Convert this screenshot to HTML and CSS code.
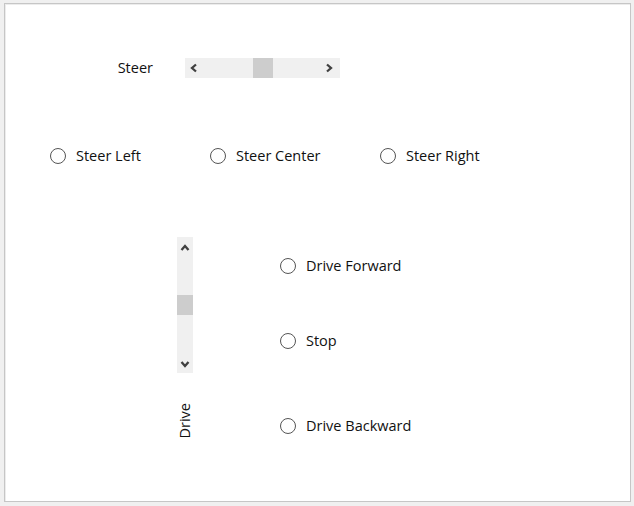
FILE: index.html
```html
<!DOCTYPE html>
<html>
<head>
<meta charset="utf-8">
<link rel="stylesheet" href="styles.css">
</head>
<body>
<div class="form">
  <div class="steer-row">
    <span class="steer-label">Steer</span>
    <div class="hscroll">
      <span class="arrow arrow-left"><svg width="10" height="10" viewBox="0 0 10 10"><path d="M7 1.5 L3 5 L7 8.5" fill="none" stroke="#404040" stroke-width="2.3"/></svg></span>
      <div class="htrack"><div class="hthumb" style="margin-left:51px"></div></div>
      <span class="arrow arrow-right"><svg width="10" height="10" viewBox="0 0 10 10"><path d="M3 1.5 L7 5 L3 8.5" fill="none" stroke="#404040" stroke-width="2.3"/></svg></span>
    </div>
  </div>

  <div class="steer-radios">
    <label class="radio"><span class="dot"></span><span>Steer Left</span></label>
    <label class="radio"><span class="dot"></span><span>Steer Center</span></label>
    <label class="radio"><span class="dot"></span><span>Steer Right</span></label>
  </div>

  <div class="drive">
    <div class="drive-left">
      <div class="vscroll">
        <span class="varrow varrow-up"><svg width="10" height="10" viewBox="0 0 10 10"><path d="M1.5 7 L5 3 L8.5 7" fill="none" stroke="#404040" stroke-width="2.3"/></svg></span>
        <div class="vtrack"><div class="vthumb" style="margin-top:36px"></div></div>
        <span class="varrow varrow-down"><svg width="10" height="10" viewBox="0 0 10 10"><path d="M1.5 3 L5 7 L8.5 3" fill="none" stroke="#404040" stroke-width="2.3"/></svg></span>
      </div>
      <span class="drive-label">Drive</span>
    </div>
    <div class="drive-radios">
      <label class="radio"><span class="dot"></span><span>Drive Forward</span></label>
      <label class="radio"><span class="dot"></span><span>Stop</span></label>
      <label class="radio"><span class="dot"></span><span>Drive Backward</span></label>
    </div>
  </div>
</div>
</body>
</html>
```

FILE: styles.css
```css
html, body {
  margin: 0;
  padding: 0;
}
body {
  background: #f0f0f0;
  width: 634px;
  height: 506px;
  overflow: hidden;
  font-family: "Open Sans", "Noto Sans", "Liberation Sans", sans-serif;
  font-size: 14.5px;
  color: #111;
}
.form {
  box-sizing: border-box;
  margin: 3px 0 0 4px;
  width: 627px;
  height: 499px;
  background: #fff;
  border: 1px solid #c6c6c6;
  box-shadow: inset 1px 1px 0 #ececec;
  display: flex;
  flex-direction: column;
}
.steer-row {
  display: flex;
  align-items: center;
  height: 20px;
  margin-top: 54px;
  padding-left: 100px;
}
.steer-label {
  width: 48px;
  text-align: right;
  margin-right: 32px;
  line-height: 20px;
}
.hscroll {
  display: flex;
  width: 155px;
  height: 20px;
  background: #f0f0f0;
}
.arrow {
  display: flex;
  align-items: center;
  justify-content: center;
}
.arrow-left {
  width: 17px;
}
.arrow-right {
  width: 22px;
}
.htrack {
  flex: 1;
  display: flex;
}
.hthumb {
  width: 20px;
  height: 20px;
  background: #cdcdcd;
}
.steer-radios {
  display: grid;
  grid-template-columns: 160px 170px auto;
  margin-top: 68px;
  padding-left: 45px;
  height: 20px;
}
.radio {
  display: flex;
  align-items: center;
  height: 20px;
  gap: 10px;
  line-height: 20px;
}
.dot {
  box-sizing: border-box;
  width: 16px;
  height: 16px;
  border: 1px solid #555;
  border-radius: 50%;
  background: #fff;
  flex: none;
}
.drive {
  display: flex;
  margin-top: 71px;
  padding-left: 172px;
}
.drive-left {
  width: 16px;
  display: flex;
  flex-direction: column;
  align-items: center;
}
.vscroll {
  width: 16px;
  height: 136px;
  background: #f0f0f0;
  display: flex;
  flex-direction: column;
}
.varrow {
  display: flex;
  align-items: center;
  justify-content: center;
}
.varrow-up {
  height: 22px;
}
.varrow-down {
  height: 18px;
}
.vtrack {
  flex: 1;
}
.vthumb {
  width: 16px;
  height: 20px;
  background: #cdcdcd;
}
.drive-label {
  margin-top: 30px;
  writing-mode: vertical-rl;
  transform: rotate(180deg);
  line-height: 16px;
}
.drive-radios {
  margin-left: 87px;
  padding-top: 19px;
  display: flex;
  flex-direction: column;
  gap: 55px;
}
.drive-radios .radio:last-child {
  margin-top: 10px;
}
```
